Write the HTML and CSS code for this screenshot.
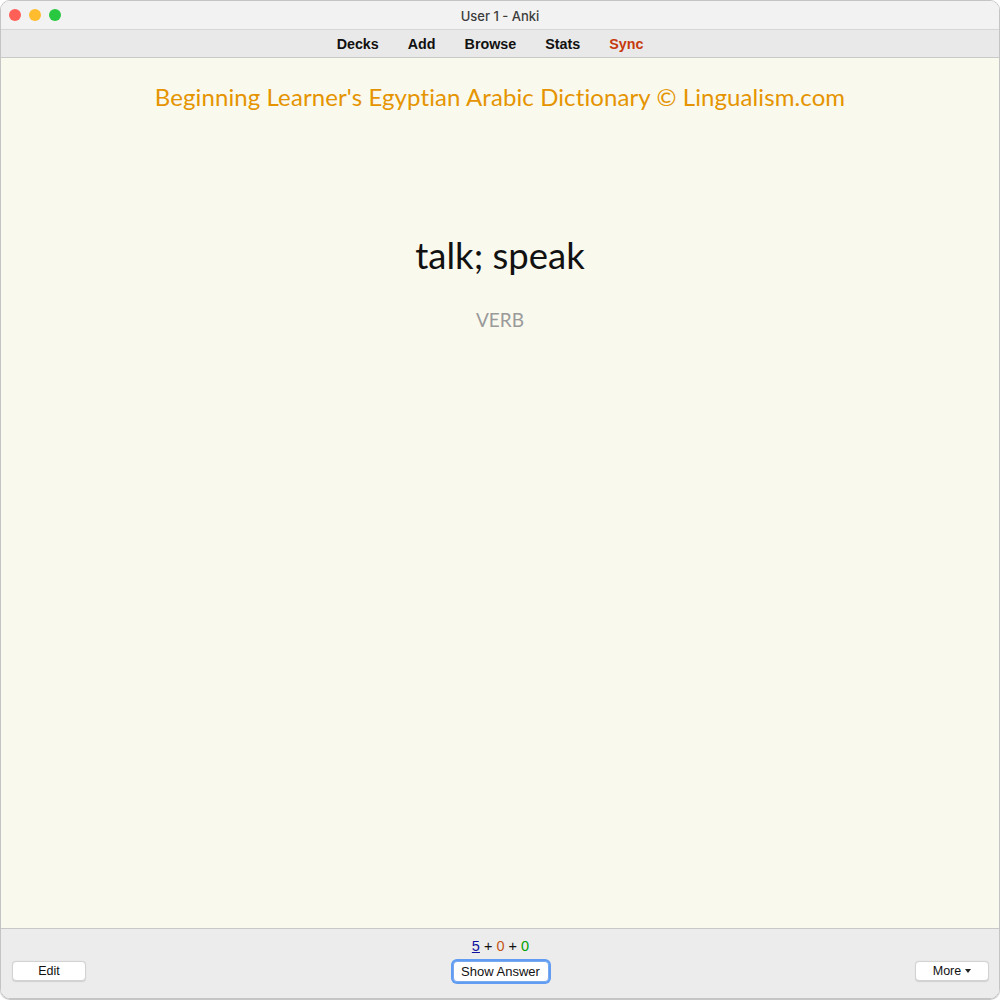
FILE: index.html
```html
<!DOCTYPE html>
<html>
<head>
<meta charset="utf-8">
<link rel="stylesheet" href="styles.css">
</head>
<body>
<div class="window">
  <div class="titlebar">
    <div class="lights">
      <span class="light red"></span>
      <span class="light yellow"></span>
      <span class="light green"></span>
    </div>
    <div class="title">User 1 - Anki</div>
  </div>
  <div class="toolbar">
    <span class="tool">Decks</span>
    <span class="tool">Add</span>
    <span class="tool">Browse</span>
    <span class="tool">Stats</span>
    <span class="tool sync">Sync</span>
  </div>
  <div class="card">
    <div class="heading">Beginning Learner's Egyptian Arabic Dictionary © Lingualism.com</div>
    <div class="word">talk; speak</div>
    <div class="pos">VERB</div>
  </div>
  <div class="bottombar">
    <div class="side left"><button class="btn">Edit</button></div>
    <div class="center">
      <div class="counts"><span class="new">5</span> + <span class="learn">0</span> + <span class="review">0</span></div>
      <button class="btn primary">Show Answer</button>
    </div>
    <div class="side right"><button class="btn">More <span class="caret"></span></button></div>
  </div>
</div>
</body>
</html>
```
FILE: styles.css
```css
html, body {
  margin: 0;
  padding: 0;
  background: #ffffff;
}
body {
  width: 1000px;
  height: 1000px;
  font-family: "Liberation Sans", Arial, sans-serif;
}
.window {
  box-sizing: border-box;
  width: 1000px;
  height: 999px;
  border: 1px solid #c4c4c4;
  border-radius: 10px;
  overflow: hidden;
  display: flex;
  flex-direction: column;
  box-shadow: 0 1px 1px rgba(0,0,0,0.25);
}
.titlebar {
  height: 28px;
  background: #f2f2f2;
  border-bottom: 1px solid #d6d6d6;
  display: flex;
  align-items: center;
  justify-content: center;
  position: relative;
  flex: none;
}
.lights {
  position: absolute;
  left: 8px;
  top: 8px;
  display: flex;
  gap: 8px;
}
.light {
  width: 12px;
  height: 12px;
  border-radius: 50%;
  display: block;
}
.light.red { background: #fe5f57; }
.light.yellow { background: #febc2e; }
.light.green { background: #28c840; }
.title {
  font-family: "Inter", "Liberation Sans", sans-serif;
  font-size: 13px;
  font-weight: 500;
  color: #3c3c3c;
  padding-top: 1px;
}
.toolbar {
  height: 27px;
  background: #e9e9e9;
  border-bottom: 1px solid #c9c9c9;
  display: flex;
  align-items: center;
  justify-content: center;
  gap: 29px;
  flex: none;
  padding-right: 20px;
}
.tool {
  font-size: 14.3px;
  font-weight: bold;
  color: #111;
}
.tool.sync { color: #c6390c; }
.card {
  flex: 1;
  background: #f9f9ee;
  display: flex;
  flex-direction: column;
  align-items: center;
  font-family: "Lato", "Noto Sans", sans-serif;
}
.heading {
  margin-top: 24px;
  font-size: 24px;
  color: #e59400;
  letter-spacing: 0.1px;
}
.word {
  margin-top: 122px;
  font-size: 36.5px;
  color: #111;
}
.pos {
  margin-top: 31px;
  font-size: 19px;
  color: #9a9a9a;
}
.bottombar {
  height: 69px;
  flex: none;
  background: #ececec;
  border-top: 1px solid #c8c8c8;
  display: flex;
  justify-content: space-between;
  align-items: stretch;
  padding: 0 10px 0 11px;
}
.side {
  width: 80px;
  display: flex;
  align-items: flex-start;
  padding-top: 32px;
}
.side.right { justify-content: flex-end; }
.center {
  display: flex;
  flex-direction: column;
  align-items: center;
  padding-top: 9px;
}
.counts {
  font-size: 14.5px;
  color: #111;
  height: 17px;
  line-height: 17px;
}
.counts .new { color: #1010a0; text-decoration: underline; }
.counts .learn { color: #c35617; }
.counts .review { color: #00a000; }
.btn {
  font-family: "Liberation Sans", Arial, sans-serif;
  font-size: 12.5px;
  color: #111;
  background: #ffffff;
  border: 1px solid #d2d2d2;
  border-radius: 4px;
  height: 20px;
  width: 74px;
  padding: 0;
  box-shadow: 0 0.5px 1px rgba(0,0,0,0.12);
  display: flex;
  align-items: center;
  justify-content: center;
  gap: 4px;
}
.btn.primary {
  margin-top: 6px;
  width: 96px;
  height: 21px;
  font-size: 13px;
  border: 1px solid #7aa9ef;
  box-shadow: 0 0 0 2px #5f9cf2;
}
.caret {
  width: 0;
  height: 0;
  border-left: 3.5px solid transparent;
  border-right: 3.5px solid transparent;
  border-top: 4px solid #222;
  display: inline-block;
}
```
